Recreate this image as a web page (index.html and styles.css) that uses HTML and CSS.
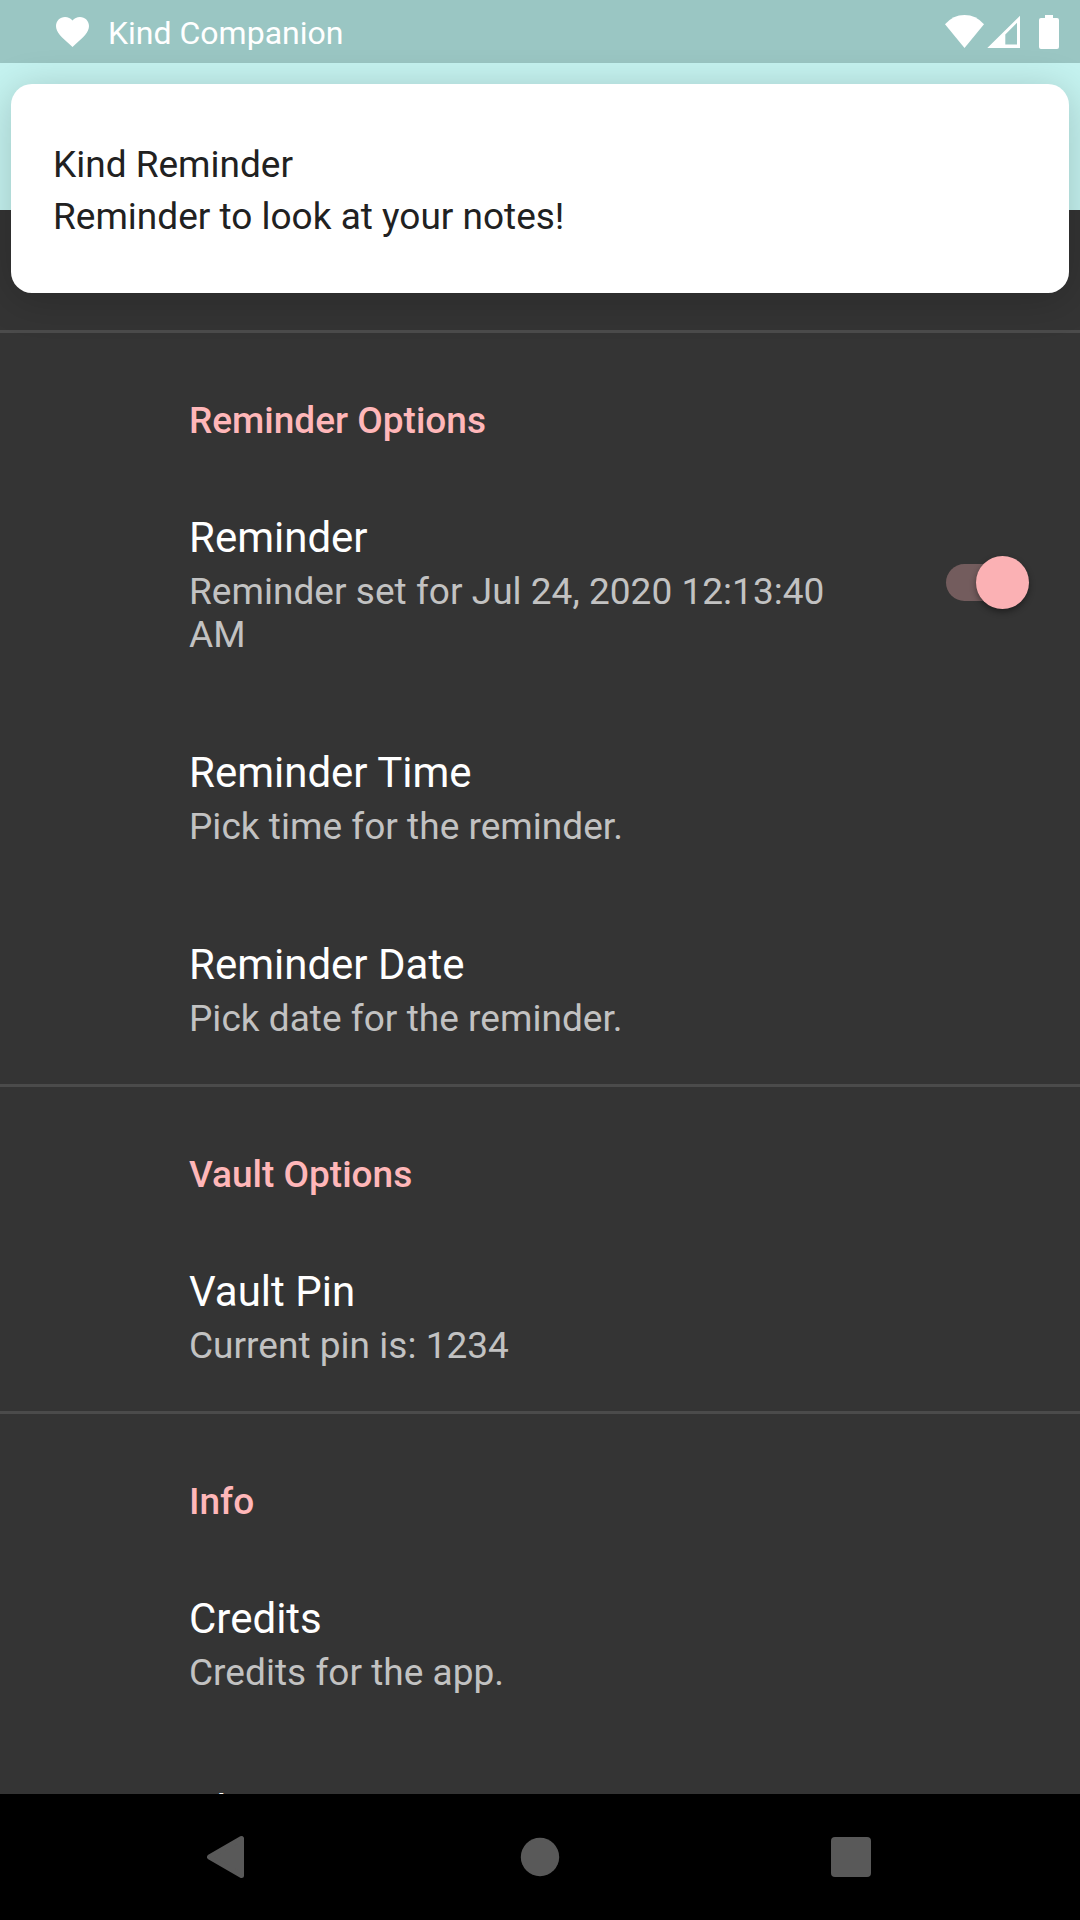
FILE: index.html
```html
<!DOCTYPE html>
<html lang="en">
<head>
<meta charset="utf-8">
<title>Kind Companion</title>
<link rel="stylesheet" href="styles.css">
</head>
<body>
<div class="screen">
  <header class="app-bar">
    <div class="status-bar">
      <svg class="heart" width="33" height="30" viewBox="2 3 20 18.35" preserveAspectRatio="none"><path fill="#fff" d="M12 21.35l-1.45-1.32C5.4 15.36 2 12.28 2 8.5 2 5.42 4.42 3 7.5 3c1.74 0 3.41.81 4.5 2.09C13.09 3.81 14.76 3 16.5 3 19.58 3 22 5.42 22 8.5c0 3.78-3.4 6.86-8.55 11.54z"/></svg>
      <span class="app-name">Kind Companion</span>
      <svg class="system-icons" width="114" height="34" viewBox="0 0 114 34" fill="#fff">
        <path d="M0 9.3Q8 0 19.5 0T39 9.3L19.5 33z"/>
        <path fill-rule="evenodd" d="M75 .7V33H42.300zM72 7.800L60.300 19.500V29.500H72z"/>
        <path d="M100 0h8v3h4a2 2 0 0 1 2 2v27a2 2 0 0 1-2 2H96a2 2 0 0 1-2-2V5a2 2 0 0 1 2-2h4z"/>
      </svg>
    </div>
  </header>

  <main class="settings">
    <section class="group">
      <h2 class="group-title">Reminder Options</h2>
      <div class="item">
        <div class="item-text">
          <div class="title">Reminder</div>
          <div class="summary">Reminder set for Jul 24, 2020 12:13:40 AM</div>
        </div>
        <div class="switch"><span class="thumb"></span></div>
      </div>
      <div class="item">
        <div class="item-text">
          <div class="title">Reminder Time</div>
          <div class="summary">Pick time for the reminder.</div>
        </div>
      </div>
      <div class="item">
        <div class="item-text">
          <div class="title">Reminder Date</div>
          <div class="summary">Pick date for the reminder.</div>
        </div>
      </div>
    </section>
    <section class="group">
      <h2 class="group-title">Vault Options</h2>
      <div class="item">
        <div class="item-text">
          <div class="title">Vault Pin</div>
          <div class="summary">Current pin is: 1234</div>
        </div>
      </div>
    </section>
    <section class="group">
      <h2 class="group-title">Info</h2>
      <div class="item">
        <div class="item-text">
          <div class="title">Credits</div>
          <div class="summary">Credits for the app.</div>
        </div>
      </div>
      <div class="item">
        <div class="item-text">
          <div class="title">About</div>
        </div>
      </div>
    </section>
  </main>

  <nav class="nav-bar">
    <svg width="44" height="44" viewBox="0 0 44 44"><path fill="#595959" stroke="#595959" stroke-width="5" stroke-linejoin="round" d="M2.500 22L34.500 3.500V40.500z"/></svg>
    <svg width="44" height="44" viewBox="0 0 44 44"><circle cx="22" cy="22" r="19.200" fill="#595959"/></svg>
    <svg width="44" height="44" viewBox="0 0 44 44"><rect x="2" y="2" width="40" height="40" rx="4" fill="#595959"/></svg>
  </nav>

  <aside class="notification">
    <div>Kind Reminder</div>
    <div>Reminder to look at your notes!</div>
  </aside>
</div>
</body>
</html>
```
FILE: styles.css
```css
* {
  box-sizing: border-box;
}

body {
  margin: 0;
  background: #000;
  font-family: Roboto, "Noto Sans", sans-serif;
}

.screen {
  position: relative;
  display: flex;
  flex-direction: column;
  width: 1080px;
  height: 1920px;
  overflow: hidden;
}

.app-bar {
  flex: none;
  height: 210px;
  background: #c5f3f0;
}

.status-bar {
  display: flex;
  align-items: center;
  height: 63px;
  padding: 0 21px 0 56px;
  background: #9ac6c3;
}

.heart {
  margin-right: 19px;
}

.app-name {
  flex: 1;
  margin-top: 3px;
  color: #fff;
  font-size: 32px;
  line-height: 40px;
}

.settings {
  flex: 1;
  min-height: 0;
  padding-top: 120px;
  overflow: hidden;
  background: #343434;
}

.group {
  border-top: 3px solid #4b4b4b;
}

.group-title {
  margin: 0;
  padding: 63px 42px 19px 189px;
  color: #ffb7b9;
  font-size: 37px;
  font-weight: 500;
  line-height: 50px;
}

.item {
  display: flex;
  align-items: center;
  justify-content: space-between;
  padding: 48px 50px 44px 189px;
}

.item-text {
  width: 672px;
}

.title {
  color: #fff;
  font-size: 42px;
  line-height: 50px;
}

.summary {
  margin-top: 7px;
  color: #c2c2c2;
  font-size: 37px;
  line-height: 43px;
  letter-spacing: 0.03px;
}

.switch {
  display: flex;
  align-items: center;
  justify-content: flex-end;
  width: 84px;
  height: 37px;
  margin-top: -4px;
  border-radius: 19px;
  background: linear-gradient(to right, #735c5d 60px, transparent 60px);
}

.thumb {
  width: 53px;
  height: 53px;
  margin-right: 1px;
  border-radius: 50%;
  background: #fbb1b4;
  box-shadow: 0 3px 6px rgba(0, 0, 0, 0.4);
}

.nav-bar {
  display: grid;
  flex: none;
  grid-template-columns: repeat(3, 311px);
  place-content: center;
  place-items: center;
  height: 126px;
  background: #000;
}

.notification {
  position: absolute;
  top: 84px;
  left: 11px;
  width: 1058px;
  height: 209px;
  padding: 55px 42px;
  border-radius: 21px;
  background: #fff;
  box-shadow: 0 6px 42px rgba(0, 0, 0, 0.2);
  color: #212121;
  font-size: 37px;
  line-height: 52px;
}
```
